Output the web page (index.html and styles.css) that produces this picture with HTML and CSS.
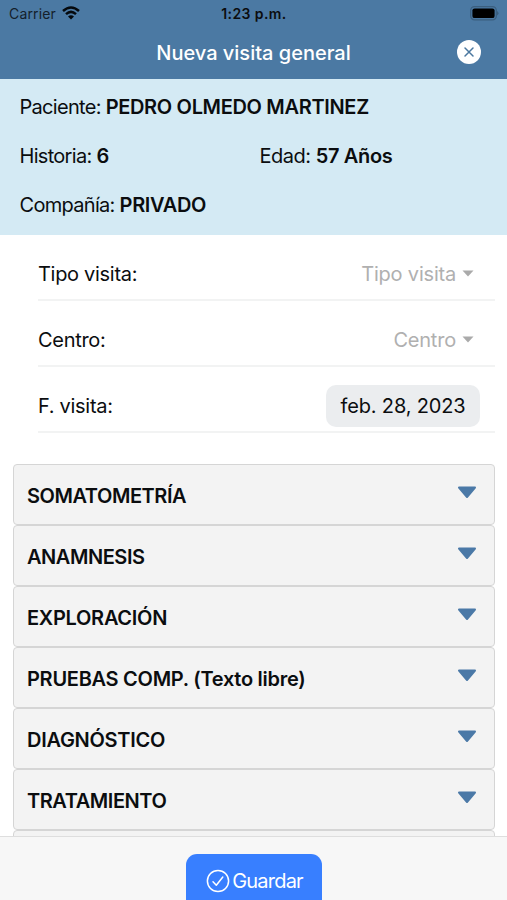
FILE: index.html
```html
<!DOCTYPE html>
<html lang="es">
<head>
<meta charset="utf-8">
<title>Nueva visita general</title>
<link rel="stylesheet" href="styles.css">
</head>
<body>
<div class="screen">
  <header class="header">
    <div class="status">
      <div class="carrier"><span>Carrier</span>
        <svg class="wifi" width="18" height="14" viewBox="0 0 18 14" fill="none" stroke="#05090d" stroke-width="2.5"><path d="M1 5Q9-2 17 5M4 8.1Q9 3.7 14 8.1"/><path d="M9 13.4L6 10.4Q9 8 12 10.4Z" fill="#05090d" stroke="none"/></svg>
      </div>
      <span class="time">1:23 p.m.</span>
      <svg class="battery" width="30" height="15" viewBox="0 0 30 15"><rect x="1.7" y=".7" width="25.6" height="13.1" rx="3.8" fill="none" stroke="#3b5f7f" stroke-width="1.3"/><rect x="3.4" y="2.4" width="22.2" height="9.7" rx="2.2" fill="#000"/><path d="M28.3 5Q30.4 7.2 28.3 9.6Z" fill="#34536e"/></svg>
    </div>
    <div class="titlebar">
      <h1 class="title">Nueva visita general</h1>
      <svg class="close" width="24" height="24" viewBox="0 0 24 24"><circle cx="12" cy="12" r="12" fill="#fff"/><path d="M8 8l8 8M16 8l-8 8" stroke="#4a779f" stroke-width="1.5" stroke-linecap="round"/></svg>
    </div>
  </header>
  <section class="patient">
    <p class="wide">Paciente: <b>PEDRO OLMEDO MARTINEZ</b></p>
    <p>Historia: <b>6</b></p>
    <p class="age">Edad: <b>57 Años</b></p>
    <p class="wide">Compañía: <b>PRIVADO</b></p>
  </section>
  <main class="content">
    <div class="fields">
      <div class="field"><span>Tipo visita:</span><span class="select">Tipo visita<svg width="12" height="7" viewBox="0 0 12 7"><path d="M.5.5h11L6 6.6z" fill="#aaa"/></svg></span></div>
      <div class="field"><span>Centro:</span><span class="select">Centro<svg width="12" height="7" viewBox="0 0 12 7"><path d="M.5.5h11L6 6.6z" fill="#aaa"/></svg></span></div>
      <div class="field"><span>F. visita:</span><span class="date">feb. 28, 2023</span></div>
    </div>
    <div class="panels">
      <div class="panel"><span class="tight">SOMATOMETRÍA</span><svg class="arrow" viewBox="0 0 20 13"><path d="M2 1.5h16L10 11z"/></svg></div>
      <div class="panel"><span class="tight">ANAMNESIS</span><svg class="arrow" viewBox="0 0 20 13"><path d="M2 1.5h16L10 11z"/></svg></div>
      <div class="panel"><span>EXPLORACIÓN</span><svg class="arrow" viewBox="0 0 20 13"><path d="M2 1.5h16L10 11z"/></svg></div>
      <div class="panel"><span>PRUEBAS COMP. (Texto libre)</span><svg class="arrow" viewBox="0 0 20 13"><path d="M2 1.5h16L10 11z"/></svg></div>
      <div class="panel"><span>DIAGNÓSTICO</span><svg class="arrow" viewBox="0 0 20 13"><path d="M2 1.5h16L10 11z"/></svg></div>
      <div class="panel"><span class="tight">TRATAMIENTO</span><svg class="arrow" viewBox="0 0 20 13"><path d="M2 1.5h16L10 11z"/></svg></div>
      <div class="panel"></div>
    </div>
  </main>
  <footer class="footer">
    <button class="save"><svg width="24" height="24" viewBox="0 0 24 24" fill="none" stroke="#fff" stroke-width="1.5" stroke-linecap="round" stroke-linejoin="round"><circle cx="12" cy="12" r="10.6"/><path d="M7 12.8l3.3 3.5L16.8 8"/></svg><span>Guardar</span></button>
  </footer>
</div>
</body>
</html>
```
FILE: styles.css
```css
* { box-sizing: border-box; }
body { margin: 0; font-family: Inter, "Liberation Sans", sans-serif; font-size: 20px; color: #0b0d0f; background: #fff; }
.screen { height: 900px; display: flex; flex-direction: column; overflow: hidden; }
.header { flex: none; height: 79px; background: #4b79a3; }
.status { height: 27px; display: grid; grid-template-columns: 1fr auto 1fr; align-items: center; padding: 0 8px 0 9px; font-size: 14px; }
.carrier { display: flex; align-items: center; gap: 6px; letter-spacing: .15px; color: #14202b; }
.wifi { margin-top: -2px; }
.time { font-weight: 600; letter-spacing: .4px; }
.battery { justify-self: end; }
.titlebar { height: 52px; display: grid; grid-template-columns: 1fr auto 1fr; align-items: center; padding: 0 26px; }
.title { grid-column: 2; margin: 0; font-size: 20px; font-weight: 500; color: #fff; letter-spacing: 0; }
.close { justify-self: end; margin-top: -2px; }
.patient { flex: none; height: 156px; padding: 3px 20px 6px 19.5px; background: #d4eaf4; display: grid; grid-template-columns: 240px 1fr; grid-template-rows: repeat(3, 49px); align-items: center; letter-spacing: -.7px; }
.patient p { margin: 0; white-space: nowrap; }
.patient b { font-weight: 600; letter-spacing: -.33px; }
.patient .age { letter-spacing: -.5px; }
.wide { grid-column: 1 / 3; }
.content { flex: 1; min-height: 0; overflow: hidden; }
.fields { padding: 0 12px 0 38px; letter-spacing: -.3px; }
.field { height: 66px; padding: 13px 15px 0 0; display: flex; justify-content: space-between; align-items: center; border-bottom: 2px solid #f2f3f3; }
.select { display: flex; align-items: center; gap: 6px; padding-right: 6px; color: #b0b0b0; letter-spacing: -.2px; }
.date { width: 154px; height: 42px; line-height: 42px; border-radius: 10px; background: #ebedef; text-align: center; letter-spacing: -.15px; }
.panels { margin: 31px 12px 0 13px; }
.panel { height: 61px; padding: 2px 17px 0 13px; border: 1px solid #d5d5d5; border-radius: 4px; background: #f3f3f3; display: flex; justify-content: space-between; align-items: center; font-weight: 600; letter-spacing: -.28px; }
.panel .tight { letter-spacing: -.45px; }
.arrow { width: 20px; height: 13px; margin-top: -6px; fill: #4b79a7; stroke: #4b79a7; stroke-width: 2; stroke-linejoin: round; }
.footer { flex: none; height: 64px; border-top: 1px solid #dedede; background: #f7f7f7; display: flex; justify-content: center; align-items: flex-start; padding-top: 17px; overflow: hidden; }
.save { width: 136px; height: 56px; padding: 0 4px 2px 6px; border: 0; border-radius: 11px; background: #387fff; color: #fff; font: 400 20px Inter, "Liberation Sans", sans-serif; letter-spacing: -.8px; display: flex; align-items: center; justify-content: center; gap: 2px; }
```
